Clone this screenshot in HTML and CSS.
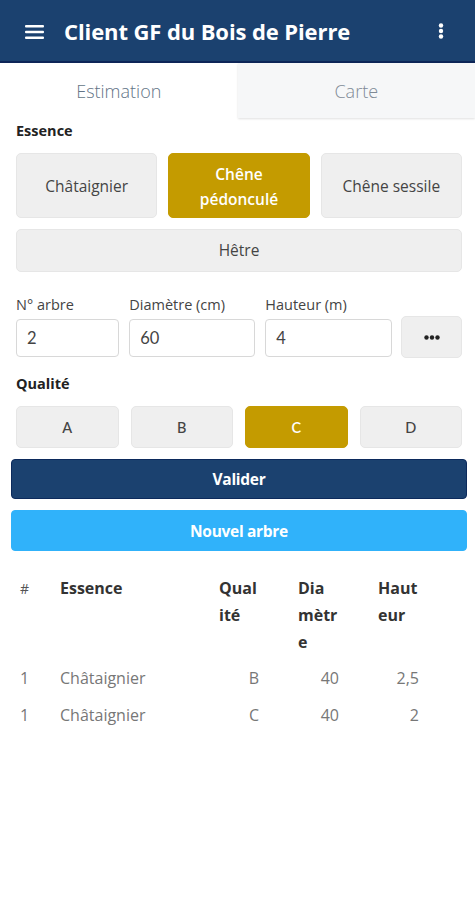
FILE: index.html
```html
<!DOCTYPE html>
<html lang="fr">
<head>
<meta charset="utf-8">
<title>Client GF du Bois de Pierre</title>
<link rel="stylesheet" href="styles.css">
</head>
<body>
<header class="appbar">
  <svg class="menu-icon" width="20" height="14" viewBox="0 0 20 14"><rect x="0" y="0" width="19" height="2.6" rx="1" fill="#fff"/><rect x="0" y="5.7" width="19" height="2.6" rx="1" fill="#fff"/><rect x="0" y="11.4" width="19" height="2.6" rx="1" fill="#fff"/></svg>
  <h1 class="title">Client GF du Bois de Pierre</h1>
  <svg class="kebab" width="6" height="16" viewBox="0 0 6 16"><circle cx="3" cy="2.5" r="2.2" fill="#fff"/><circle cx="3" cy="8" r="2.2" fill="#fff"/><circle cx="3" cy="13.5" r="2.2" fill="#fff"/></svg>
</header>
<nav class="tabs">
  <div class="tab active">Estimation</div>
  <div class="tab">Carte</div>
</nav>
<main class="content">
  <div class="section-label">Essence</div>
  <div class="grid3">
    <button class="choice">Châtaignier</button>
    <button class="choice selected">Chêne<br>pédonculé</button>
    <button class="choice">Chêne sessile</button>
  </div>
  <button class="choice wide">Hêtre</button>

  <div class="fields">
    <label class="field"><span class="field-label">N° arbre</span><span class="input">2</span></label>
    <label class="field"><span class="field-label">Diamètre (cm)</span><span class="input">60</span></label>
    <label class="field"><span class="field-label">Hauteur (m)</span><span class="input">4</span></label>
    <button class="more"><svg width="16" height="5" viewBox="0 0 16 5"><circle cx="2.5" cy="2.5" r="2.2" fill="#222"/><circle cx="8" cy="2.5" r="2.2" fill="#222"/><circle cx="13.5" cy="2.5" r="2.2" fill="#222"/></svg></button>
  </div>

  <div class="section-label q">Qualité</div>
  <div class="grid4">
    <button class="choice small">A</button>
    <button class="choice small">B</button>
    <button class="choice small selected">C</button>
    <button class="choice small">D</button>
  </div>
</main>
<div class="actions">
  <button class="btn primary">Valider</button>
  <button class="btn info">Nouvel arbre</button>
</div>
<table class="list">
  <colgroup><col class="c1"><col class="c2"><col class="c3"><col class="c4"><col class="c5"></colgroup>
  <thead>
    <tr><th>#</th><th>Essence</th><th>Qual<br>ité</th><th>Dia<br>mètr<br>e</th><th>Haut<br>eur</th></tr>
  </thead>
  <tbody>
    <tr><td>1</td><td>Châtaignier</td><td class="num">B</td><td class="num">40</td><td class="num">2,5</td></tr>
    <tr><td>1</td><td>Châtaignier</td><td class="num">C</td><td class="num">40</td><td class="num">2</td></tr>
  </tbody>
</table>
</body>
</html>
```

FILE: styles.css
```css
* { box-sizing: border-box; }
body {
  margin: 0;
  background: #fff;
  font-family: "Open Sans", "Noto Sans", sans-serif;
  color: #333;
}
.appbar {
  height: 63px;
  background: #1b416f;
  border-bottom: 2px solid #0e2658;
  display: flex;
  align-items: center;
  padding: 0 0 0 25px;
}
.menu-icon { flex: none; margin-top: 2px; }
.title {
  margin: 0 0 0 19px;
  flex: 1;
  font-family: "Open Sans", sans-serif;
  font-weight: 700;
  font-size: 22px;
  letter-spacing: -0.1px;
  color: #fff;
}
.kebab { margin-right: 31px; flex: none; }
.tabs {
  display: flex;
  height: 55px;
}
.tab {
  flex: 1;
  display: flex;
  align-items: center;
  justify-content: center;
  font-size: 18px;
  font-weight: 300;
  color: #7f8a96;
  background: #f6f7f8;
  box-shadow: 0 1px 2px rgba(0,0,0,0.12);
}
.tab.active {
  background: #fff;
  color: #637486;
  box-shadow: none;
}
.content { padding: 0 13px 0 16px; }
.section-label {
  font-weight: 700;
  font-size: 14.5px;
  color: #222;
  margin-top: 0;
  height: 35px;
  line-height: 26px;
}
.section-label.q { margin-top: 14px; height: 35px; }
.grid3 {
  display: grid;
  grid-template-columns: 1fr 1fr 1fr;
  gap: 11px;
}
.choice {
  font-family: "Open Sans", sans-serif;
  font-size: 15.5px;
  font-weight: 500;
  color: #444;
  background: #efefef;
  border: 1px solid #e6e6e6;
  border-radius: 5px;
  height: 65px;
  padding: 2px 4px 0;
  line-height: 25px;
}
.choice.selected {
  background: #c49b00;
  border-color: #c49b00;
  color: #fff;
  font-weight: 600;
}
.choice.wide {
  width: 100%;
  height: 43px;
  margin-top: 11px;
  display: block;
  padding-top: 0;
}
.fields {
  display: flex;
  gap: 10px;
  margin-top: 23px;
  align-items: flex-end;
}
.field { display: flex; flex-direction: column; }
.field:nth-child(1) { width: 104px; }
.field:nth-child(2) { width: 127px; }
.field:nth-child(3) { width: 128px; }
.field-label {
  font-family: "Open Sans", sans-serif;
  font-size: 14.5px;
  color: #444;
  height: 24px;
}
.input {
  height: 38px;
  border: 1px solid #d8d8d8;
  border-radius: 4px;
  padding: 0 10px;
  display: flex;
  align-items: center;
  font-family: Lato, sans-serif;
  font-size: 16.5px;
  color: #444;
}
.more {
  width: 61px;
  height: 42px;
  margin-left: -1px;
  margin-bottom: -1px;
  background: #efefef;
  border: 1px solid #e6e6e6;
  border-radius: 5px;
  display: flex;
  align-items: center;
  justify-content: center;
}
.grid4 {
  display: grid;
  grid-template-columns: repeat(4, 1fr);
  gap: 12px;
}
.choice.small {
  height: 42px;
  font-family: Lato, sans-serif;
  font-size: 14.5px;
  padding-top: 0;
}
.actions {
  padding: 11px 8px 0 11px;
  display: flex;
  flex-direction: column;
  gap: 11px;
}
.btn {
  font-family: "Open Sans", sans-serif;
  font-weight: 700;
  font-size: 15.5px;
  letter-spacing: -0.3px;
  color: #fff;
  border-radius: 4px;
  height: 40px;
  border: 1px solid transparent;
}
.btn.primary { background: #1b416f; border-color: #0c2a5c; }
.btn.info { background: #30b2fa; border-color: #30b2fa; height: 41px; }
.list {
  margin: 14px 0 0 12px;
  border-collapse: collapse;
  table-layout: fixed;
  width: 415px;
  font-size: 16px;
}
.c1 { width: 48px; }
.c2 { width: 159px; }
.c3 { width: 79px; }
.c4 { width: 80px; }
.c5 { width: 49px; }
.list th {
  text-align: left;
  vertical-align: top;
  font-weight: 700;
  color: #333;
  line-height: 27px;
  padding: 10px 0 4px 0;
}
.list th:first-child, .list td:first-child { padding-left: 8px; }
.list th:first-child { color: #555; font-weight: 400; font-size: 14px; }
.list td {
  color: #777;
  line-height: 21px;
  padding: 8px 0;
}
.list td.num { text-align: right; }
.list td:nth-child(3), .list td:nth-child(4) { padding-right: 39px; }
.list td:nth-child(5) { padding-right: 8px; }
```
